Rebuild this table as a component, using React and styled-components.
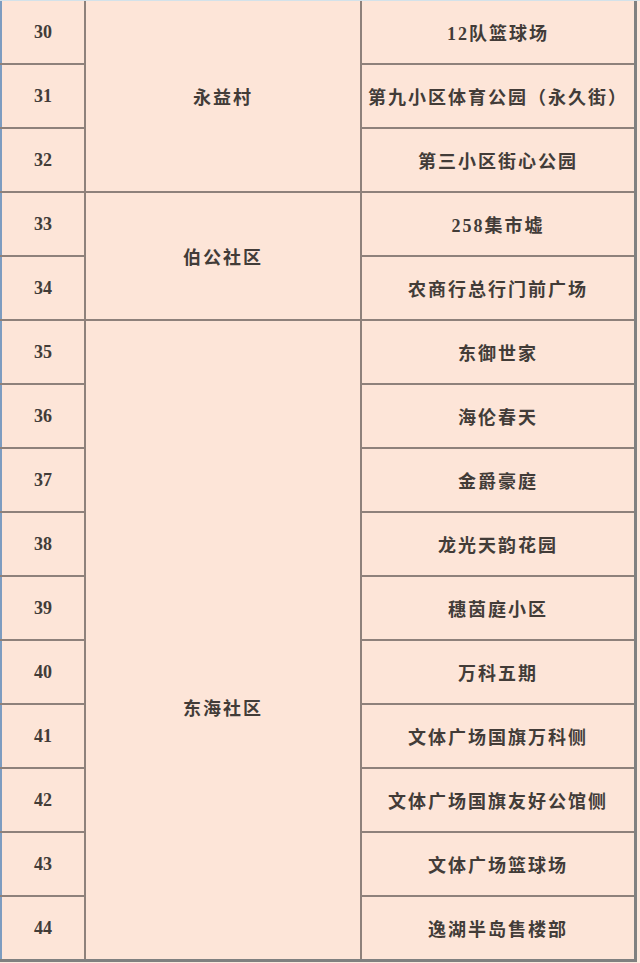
import styled, { createGlobalStyle } from 'styled-components';

const Global = createGlobalStyle`
  html, body {
    margin: 0;
    padding: 0;
    background: #fde6da;
  }
`;

const Page = styled.div`
  width: 640px;
  height: 963px;
  overflow: hidden;
  background: #fde8dd;
  border-top: 1px solid #d3e2ea;
  box-sizing: border-box;
`;

const Table = styled.table`
  width: 637px;
  table-layout: fixed;
  border-collapse: collapse;
  border-style: hidden solid solid solid;
  border-left: 2px solid #7d9cc0;
  background: #fde5d8;
`;

const Cell = styled.td`
  height: 62px;
  padding: ${(p) => (p.$shift ? `${p.$shift}px 0 0` : '0')};
  border: 2px solid #8e817b;
  border-left: ${(p) => (p.$first ? '2px solid #7d9cc0' : '2px solid #8e817b')};
  text-align: center;
  vertical-align: middle;
  font-family: "Liberation Serif", "Noto Sans CJK SC", serif;
  font-weight: 700;
  font-size: 18px;
  letter-spacing: ${(p) => (p.$num ? '0' : '2px')};
  color: #423c38;
`;

const groups = [
  { name: '永益村', places: ['12队篮球场', '第九小区体育公园（永久街）', '第三小区街心公园'] },
  { name: '伯公社区', places: ['258集市墟', '农商行总行门前广场'] },
  {
    name: '东海社区',
    shift: 134,
    places: [
      '东御世家',
      '海伦春天',
      '金爵豪庭',
      '龙光天韵花园',
      '穗茵庭小区',
      '万科五期',
      '文体广场国旗万科侧',
      '文体广场国旗友好公馆侧',
      '文体广场篮球场',
      '逸湖半岛售楼部',
    ],
  },
];

export default function App() {
  let n = 30;
  return (
    <Page>
      <Global />
      <Table>
        <colgroup>
          <col style={{ width: 84 }} />
          <col style={{ width: 276 }} />
          <col />
        </colgroup>
        <tbody>
          {groups.map((g) =>
            g.places.map((p, i) => {
              const num = n++;
              return (
                <tr key={num}>
                  <Cell $first $num>{num}</Cell>
                  {i === 0 && (
                    <Cell rowSpan={g.places.length} $shift={g.shift}>
                      {g.name}
                    </Cell>
                  )}
                  <Cell>{p}</Cell>
                </tr>
              );
            })
          )}
        </tbody>
      </Table>
    </Page>
  );
}
